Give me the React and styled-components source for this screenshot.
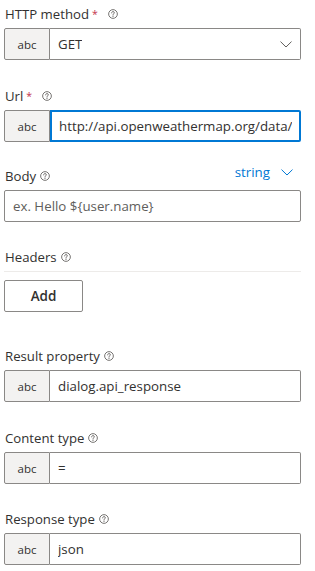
import React from "react";
import styled, { createGlobalStyle } from "styled-components";

const Global = createGlobalStyle`
  html, body { margin: 0; padding: 0; background: #ffffff; }
  body {
    font-family: "Segoe UI", "Open Sans", "Noto Sans", sans-serif;
    color: #323130;
  }
  * { box-sizing: border-box; }
`;

const Page = styled.div`
  width: 315px;
  padding: 4px 14px 0 4px;
  display: flex;
  flex-direction: column;
`;

const Field = styled.div`
  display: flex;
  flex-direction: column;
  margin-top: ${(p) => p.$mt || 0}px;
`;

const LabelRow = styled.div`
  display: flex;
  align-items: ${(p) => (p.$tall ? "stretch" : "center")};
  justify-content: space-between;
  height: ${(p) => (p.$tall ? 24 : 20)}px;
  margin-bottom: 4px;
  padding-left: 1px;
  border-bottom: ${(p) => (p.$divider ? "1px solid #edebe9" : "none")};
  ${(p) => (p.$divider ? "height: 25px; padding-bottom: 4px; margin-bottom: 8px;" : "")}
`;

const Label = styled.label`
  display: flex;
  align-items: center;
  gap: 4px;
  font-size: 13.2px;
  line-height: 20px;
  color: #323130;
  align-self: ${(p) => (p.$bottom ? "flex-end" : "center")};
`;

const Required = styled.span`
  color: #c4314b;
  font-size: 10.5px;
  margin-left: 3px;
  margin-right: 6px;
  position: relative;
  top: -1px;
`;

const TypeSelect = styled.div`
  display: flex;
  align-items: center;
  gap: 11px;
  align-self: flex-start;
  height: 20px;
  padding-right: 8px;
  font-size: 13.3px;
  line-height: 20px;
  color: #0078d4;
`;

const Group = styled.div`
  display: flex;
  height: ${(p) => p.$h || 32}px;
  width: 297px;
`;

const Prefix = styled.div`
  width: 46px;
  flex: none;
  display: flex;
  align-items: center;
  justify-content: center;
  background: #f3f2f1;
  border: 1px solid #8a8886;
  border-radius: 2px 0 0 2px;
  font-size: 11.5px;
  color: #323130;
`;

const Box = styled.div`
  flex: 1;
  min-width: 0;
  display: flex;
  align-items: center;
  justify-content: space-between;
  padding: 0 ${(p) => (p.$focused ? 7 : 8)}px;
  border: ${(p) => (p.$focused ? "2px solid #0078d4" : "1px solid #8a8886")};
  border-radius: ${(p) => (p.$prefixed ? "0 2px 2px 0" : "2px")};
  border-left-width: ${(p) => (p.$prefixed && !p.$focused ? 0 : p.$focused ? 2 : 1)}px;
  font-size: 13.3px;
  color: ${(p) => (p.$placeholder ? "#605e5c" : "#323130")};
  white-space: nowrap;
  overflow: hidden;
`;

const BoxText = styled.span`
  overflow: hidden;
  white-space: nowrap;
`;

const Button = styled.button`
  width: 79px;
  height: 32px;
  background: #ffffff;
  border: 1px solid #8a8886;
  border-radius: 2px;
  font-family: inherit;
  font-size: 13.5px;
  font-weight: 600;
  color: #323130;
  padding: 0;
`;

const Help = () => (
  <svg width="10" height="10" viewBox="0 0 11 11" fill="none">
    <circle cx="5.5" cy="5.5" r="4.8" stroke="#605e5c" strokeWidth="0.95" />
    <path
      d="M4 4.3c0-.9.7-1.5 1.5-1.5s1.5.6 1.5 1.4c0 .6-.4.9-.9 1.2-.4.3-.6.5-.6 1v.4"
      stroke="#605e5c"
      strokeWidth="0.95"
      strokeLinecap="round"
    />
    <circle cx="5.5" cy="8.2" r="0.6" fill="#605e5c" />
  </svg>
);

const Chevron = ({ color = "#605e5c" }) => (
  <svg width="12" height="7" viewBox="0 0 12 7" fill="none">
    <path d="M0.5 0.6 L6 6 L11.5 0.6" stroke={color} strokeWidth="1" />
  </svg>
);

const LabelWith = ({ text, required, bottom }) => (
  <Label $bottom={bottom}>
    <span>
      {text}
      {required && <Required>*</Required>}
    </span>
    <Help />
  </Label>
);

export default function App() {
  return (
    <>
      <Global />
      <Page>
        <Field>
          <LabelRow>
            <LabelWith text="HTTP method" required />
          </LabelRow>
          <Group>
            <Prefix>abc</Prefix>
            <Box $prefixed>
              <BoxText>GET</BoxText>
              <Chevron />
            </Box>
          </Group>
        </Field>

        <Field $mt={26}>
          <LabelRow>
            <LabelWith text="Url" required />
          </LabelRow>
          <Group>
            <Prefix>abc</Prefix>
            <Box $prefixed $focused>
              <BoxText>http://api.openweathermap.org/data/2.5/weather</BoxText>
            </Box>
          </Group>
        </Field>

        <Field $mt={20}>
          <LabelRow $tall>
            <LabelWith text="Body" bottom />
            <TypeSelect>
              <span>string</span>
              <Chevron color="#0078d4" />
            </TypeSelect>
          </LabelRow>
          <Group>
            <Box $placeholder>
              <BoxText>ex. Hello ${"{user.name}"}</BoxText>
            </Box>
          </Group>
        </Field>

        <Field $mt={25}>
          <LabelRow $divider>
            <LabelWith text="Headers" />
          </LabelRow>
          <Button>Add</Button>
        </Field>

        <Field $mt={34}>
          <LabelRow>
            <LabelWith text="Result property" />
          </LabelRow>
          <Group>
            <Prefix>abc</Prefix>
            <Box $prefixed>
              <BoxText>dialog.api_response</BoxText>
            </Box>
          </Group>
        </Field>

        <Field $mt={26}>
          <LabelRow>
            <LabelWith text="Content type" />
          </LabelRow>
          <Group>
            <Prefix>abc</Prefix>
            <Box $prefixed>
              <BoxText>=</BoxText>
            </Box>
          </Group>
        </Field>

        <Field $mt={25}>
          <LabelRow>
            <LabelWith text="Response type" />
          </LabelRow>
          <Group>
            <Prefix>abc</Prefix>
            <Box $prefixed>
              <BoxText>json</BoxText>
            </Box>
          </Group>
        </Field>
      </Page>
    </>
  );
}
